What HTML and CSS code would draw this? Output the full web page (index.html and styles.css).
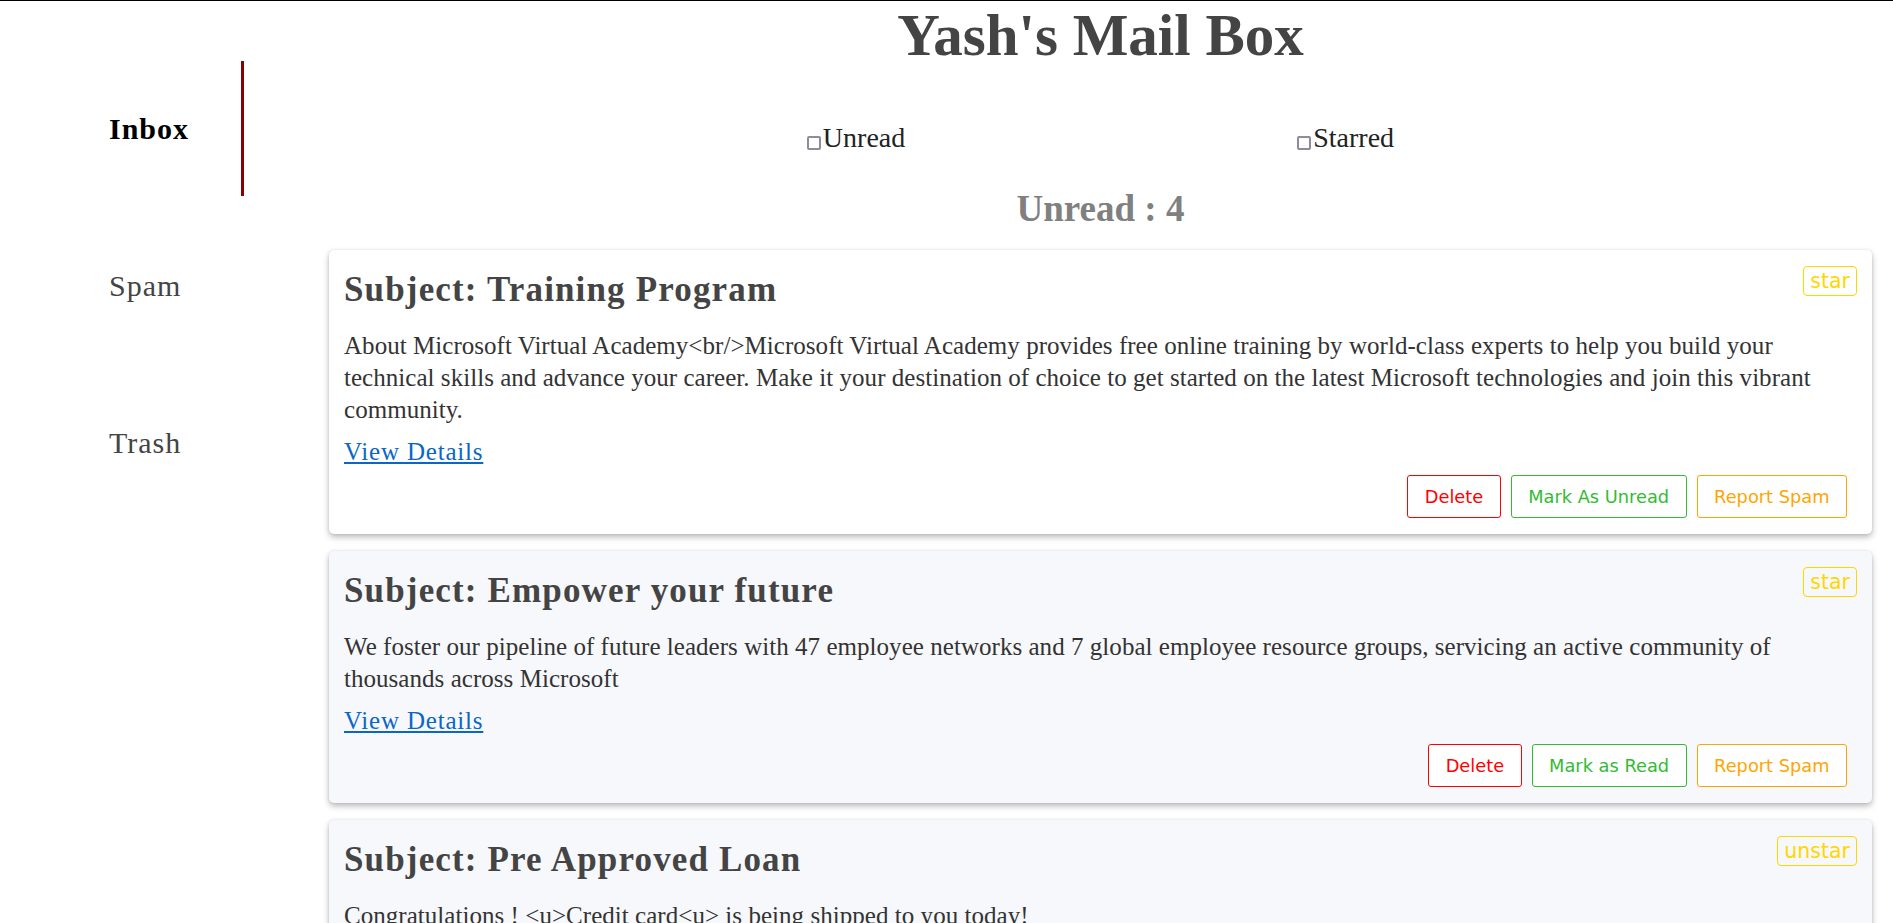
FILE: index.html
```html
<!DOCTYPE html>
<html lang="en">
<head>
<meta charset="utf-8">
<title>Yash's Mail Box</title>
<link rel="stylesheet" href="styles.css">
</head>
<body>
<div class="page">
  <nav class="sidebar">
    <div class="nav-item active">Inbox</div>
    <div class="nav-item">Spam</div>
    <div class="nav-item">Trash</div>
  </nav>
  <main class="main">
    <h1 class="title">Yash's Mail Box</h1>
    <div class="filters">
      <label class="filter"><input type="checkbox" class="check">Unread</label>
      <label class="filter"><input type="checkbox" class="check">Starred</label>
    </div>
    <div class="count">Unread : 4</div>

    <div class="card card-read">
      <span class="star">star</span>
      <h2 class="subject">Subject: Training Program</h2>
      <p class="body-text">About Microsoft Virtual Academy&lt;br/&gt;Microsoft Virtual Academy provides free online training by world-class experts to help you build your technical skills and advance your career. Make it your destination of choice to get started on the latest Microsoft technologies and join this vibrant community.</p>
      <div class="details"><a href="#" class="link">View Details</a></div>
      <div class="actions">
        <button class="btn btn-delete">Delete</button>
        <button class="btn btn-mark">Mark As Unread</button>
        <button class="btn btn-spam">Report Spam</button>
      </div>
    </div>

    <div class="card card-unread">
      <span class="star">star</span>
      <h2 class="subject">Subject: Empower your future</h2>
      <p class="body-text">We foster our pipeline of future leaders with 47 employee networks and 7 global employee resource groups, servicing an active community of thousands across Microsoft</p>
      <div class="details"><a href="#" class="link">View Details</a></div>
      <div class="actions">
        <button class="btn btn-delete">Delete</button>
        <button class="btn btn-mark">Mark as Read</button>
        <button class="btn btn-spam">Report Spam</button>
      </div>
    </div>

    <div class="card card-unread">
      <span class="star">unstar</span>
      <h2 class="subject">Subject: Pre Approved Loan</h2>
      <p class="body-text">Congratulations ! &lt;u&gt;Credit card&lt;u&gt; is being shipped to you today!</p>
      <div class="details"><a href="#" class="link">View Details</a></div>
      <div class="actions">
        <button class="btn btn-delete">Delete</button>
        <button class="btn btn-mark">Mark as Read</button>
        <button class="btn btn-spam">Report Spam</button>
      </div>
    </div>
  </main>
</div>
</body>
</html>
```

FILE: styles.css
```css
html, body {
  margin: 0;
  padding: 0;
  background: #ffffff;
}

body {
  font-family: "Liberation Serif", "Times New Roman", serif;
  color: #333333;
}

.page {
  display: flex;
  align-items: flex-start;
  border-top: 1px solid #000000;
}

.sidebar {
  flex: 0 0 244px;
  padding-top: 60px;
  display: flex;
  flex-direction: column;
  gap: 22px;
}

.nav-item {
  height: 135px;
  box-sizing: border-box;
  padding-left: 109px;
  display: flex;
  align-items: center;
  font-size: 30px;
  letter-spacing: 1px;
  color: #444444;
}

.nav-item.active {
  font-weight: bold;
  color: #000000;
  border-right: 3px solid #8b0000;
}

.main {
  flex: 1 1 auto;
  margin-left: 85px;
  margin-right: 21px;
  min-width: 0;
}

.title {
  margin: 1px 0 0;
  font-size: 59px;
  line-height: 67px;
  font-weight: bold;
  text-align: center;
  color: #444444;
}

.filters {
  margin-top: 53px;
  display: flex;
  justify-content: center;
  gap: 392px;
  font-size: 28px;
  line-height: 32px;
  color: #222222;
}

.filter {
  display: inline-flex;
  align-items: baseline;
}

.check {
  -webkit-appearance: none;
  appearance: none;
  box-sizing: border-box;
  margin: 0 2px 0 0;
  width: 14px;
  height: 14px;
  border: 2px solid #8c8c9a;
  border-radius: 2px;
  background: #ffffff;
  position: relative;
  top: 3px;
}

.count {
  margin-top: 34px;
  font-size: 37px;
  line-height: 42px;
  font-weight: bold;
  text-align: center;
  color: #808080;
}

.card {
  position: relative;
  margin-top: 20px;
  padding: 16px 15px 16px;
  border-radius: 5px;
  box-shadow: 0 3px 6px rgba(0, 0, 0, 0.28), 0 0 3px rgba(0, 0, 0, 0.08);
}

.card + .card {
  margin-top: 17px;
}

.card-read {
  background: #ffffff;
}

.card-unread {
  background: #f7f8fb;
}

.star {
  position: absolute;
  top: 16px;
  right: 15px;
  font-family: "DejaVu Sans", Verdana, sans-serif;
  font-size: 20.5px;
  line-height: 24px;
  padding: 2px 6px;
  border: 1px solid #ffd700;
  border-radius: 4px;
  color: #ffd700;
}

.subject {
  margin: 4px 0 0;
  font-size: 35px;
  line-height: 40px;
  letter-spacing: 1.15px;
  font-weight: bold;
  color: #444444;
}

.body-text {
  margin: 20px 0 0;
  font-size: 25px;
  line-height: 32px;
  letter-spacing: 0.04px;
  color: #333333;
}

.details {
  margin-top: 10px;
  font-size: 25px;
  line-height: 32px;
}

.link {
  color: #0a66c8;
  letter-spacing: 0.8px;
  text-decoration: underline;
}

.actions {
  margin-top: 7px;
  padding-right: 10px;
  display: flex;
  justify-content: flex-end;
  gap: 10px;
}

.btn {
  font-family: "DejaVu Sans", Verdana, sans-serif;
  font-size: 17.8px;
  line-height: 21px;
  padding: 10px 16.5px;
  background: #ffffff;
  border: 1px solid;
  border-radius: 3px;
  cursor: pointer;
}

.btn-delete {
  color: #ff0000;
  border-color: #ff0000;
}

.btn-mark {
  color: #33bb33;
  border-color: #33bb33;
}

.btn-spam {
  color: #ffa500;
  border-color: #ffa500;
}
```
